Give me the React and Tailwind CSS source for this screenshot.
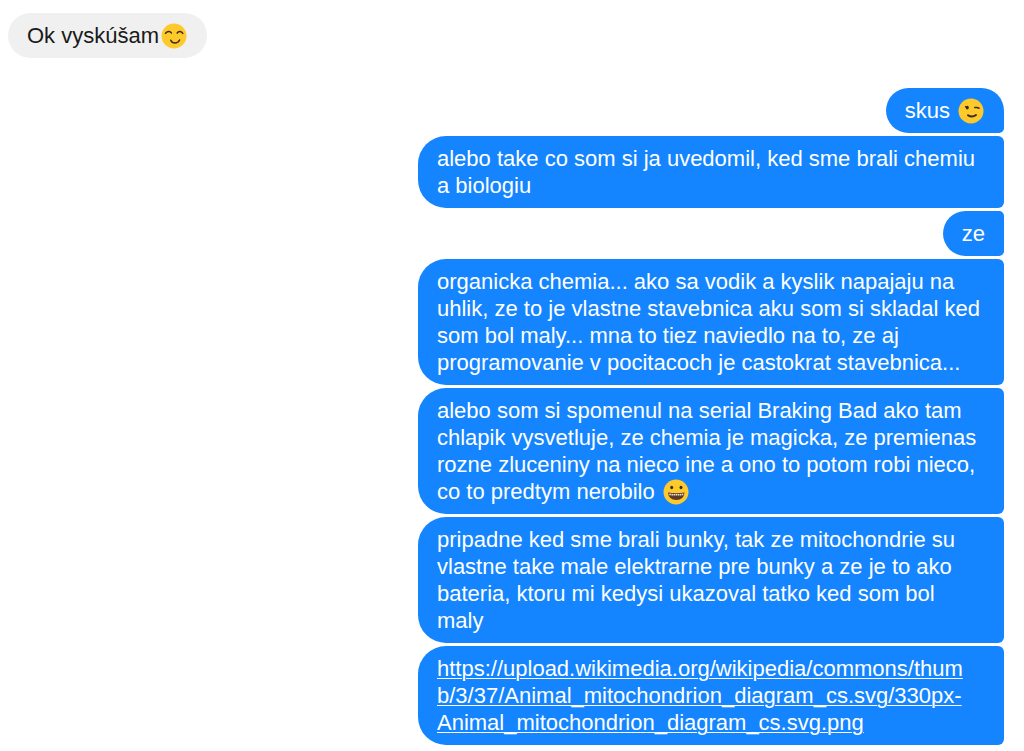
import React from "react";
import clsx from "clsx";

const diagramUrl = [
    "https://upload.wikimedia.org/wikipedia/commons/thum",
    "b/3/37/Animal_mitochondrion_diagram_cs.svg/330px-",
    "Animal_mitochondrion_diagram_cs.svg.png",
];

function Emoji({ label, children }) {
    return (
        <svg role="img" aria-label={label} viewBox="0 0 26 26" className="ml-[2px] mr-px inline-block size-[26px] align-[-6px]">
            <circle cx="13" cy="13" r="12.5" fill="#fdc92b" />
            {children}
        </svg>
    );
}

function Blush() {
    return (
        <Emoji label="😊">
            <g fill="none" stroke="#3b2a26" strokeWidth="1.5" strokeLinecap="round">
                <path d="M4.5 10.4Q5.5 8.6 7.5 8.4T10.4 10" />
                <path d="M16.2 10Q17.2 8.3 19 8.4T21.8 10.4" />
                <path d="M9.8 17.3Q10.8 20 14 20T18.6 17" />
            </g>
        </Emoji>
    );
}

function Wink() {
    return (
        <Emoji label="😉">
            <ellipse cx="9.3" cy="9.6" rx="1.5" ry="1.9" fill="#3b2a26" />
            <g fill="none" stroke="#3b2a26" strokeWidth="1.5" strokeLinecap="round">
                <path d="M9.3 9.3L7.6 8.7" />
                <path d="M16.7 9.6H19.2L21 10.2" />
                <path d="M10 17.2Q14 20 18 17" strokeWidth="2" />
            </g>
        </Emoji>
    );
}

function Grin() {
    return (
        <Emoji label="😀">
            <ellipse cx="8.7" cy="8.5" rx="1.5" ry="1.8" fill="#3b2a26" />
            <ellipse cx="18" cy="8.5" rx="1.5" ry="1.8" fill="#3b2a26" />
            <path d="M5 13.6Q13.5 14.8 21.5 13.6Q21 21 13.3 21T5 13.6Z" fill="#5b3a2c" />
            <path d="M6.3 15.4Q13.5 16.2 20.3 15.4" fill="none" stroke="#e9e2d4" strokeWidth="1.6" strokeDasharray="1.6 0.5" />
        </Emoji>
    );
}

const messages = [
    <>skus <Wink /></>,
    "alebo take co som si ja uvedomil, ked sme brali chemiu a biologiu",
    "ze",
    "organicka chemia... ako sa vodik a kyslik napajaju na uhlik, ze to je vlastne stavebnica aku som si skladal ked som bol maly... mna to tiez naviedlo na to, ze aj programovanie v pocitacoch je castokrat stavebnica...",
    <>
        alebo som si spomenul na serial Braking Bad ako tam chlapik vysvetluje, ze chemia je magicka, ze premienas
        rozne zluceniny na nieco ine a ono to potom robi nieco, co to predtym nerobilo <Grin />
    </>,
    "pripadne ked sme brali bunky, tak ze mitochondrie su vlastne take male elektrarne pre bunky a ze je to ako bateria, ktoru mi kedysi ukazoval tatko ked som bol maly",
    <a href={diagramUrl.join("")} className="underline decoration-1 underline-offset-2 wrap-anywhere">
        {diagramUrl[0]}
        <br />
        {diagramUrl[1]}
        <br />
        {diagramUrl[2]}
    </a>,
];

export default function App() {
    return (
        <main className="bg-white pt-[13px] pr-5 pb-[6px] pl-2 font-['Liberation_Sans',Arial,sans-serif] text-[22px] leading-[27px]">
            {/* Received */}
            <div className="flex">
                <div className="max-w-[586px] rounded-full bg-[#f0f0f0] px-[19px] py-[9px] text-[#1a1a1a]">
                    Ok vyskúšam<Blush />
                </div>
            </div>

            {/* Sent */}
            <div className="mt-[30px] flex flex-col items-end gap-[3px]">
                {messages.map((message, idx) => (
                    <div
                        key={idx}
                        className={clsx(
                            "max-w-[586px] rounded-l-[28px] rounded-br-[6px] bg-[#1485ff] px-[19px] py-[9px] text-white",
                            idx === 0 ? "rounded-tr-[28px]" : "rounded-tr-[6px]",
                            idx === messages.length - 1 && "w-full"
                        )}
                    >
                        {message}
                    </div>
                ))}
            </div>
        </main>
    );
}
